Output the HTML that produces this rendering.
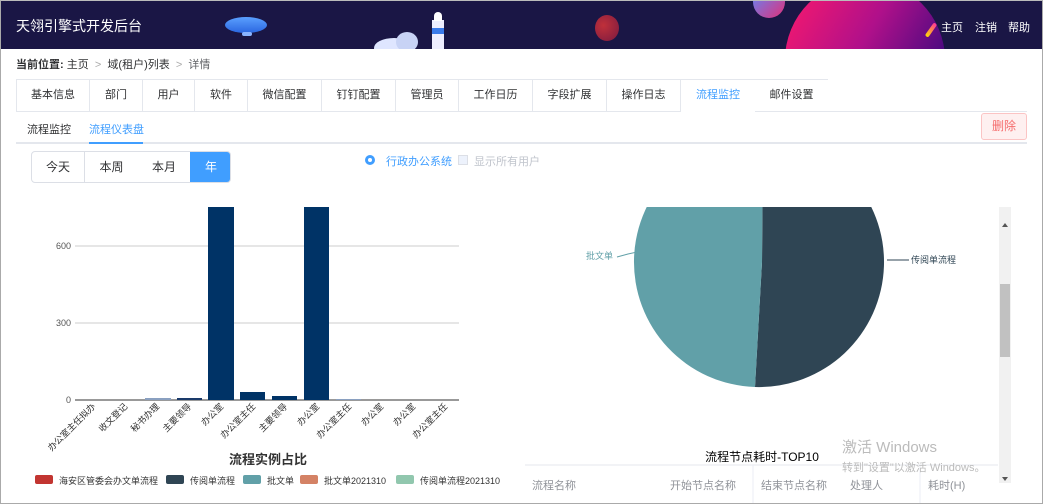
<!DOCTYPE html>
<html><head><meta charset="utf-8">
<style>
*{margin:0;padding:0;box-sizing:border-box}
body{width:1043px;height:504px;overflow:hidden;background:#fff;font-family:"Liberation Sans","Noto Sans CJK SC",sans-serif;position:relative;font-size:12px;color:#303133}
.frame{position:absolute;left:0;top:0;width:1043px;height:504px;border:1px solid #aaa;border-top:1px solid #bbb;pointer-events:none;z-index:10}
.hdr{position:absolute;left:0;top:0;width:1043px;height:49px;background:#1a1645;overflow:hidden}
.abs{position:absolute}
.tab{position:absolute;top:79px;height:32px;line-height:32px;text-align:center;font-size:11px;color:#303133;border-right:1px solid #e4e7ed}
</style></head><body>
<div class="hdr">
  <div class="abs" style="left:16px;top:16px;color:#fff;font-size:14px">天翎引擎式开发后台</div>
  <div class="abs" style="left:225px;top:17px;width:42px;height:16px;border-radius:50%;background:linear-gradient(#5aa0ff,#2a66e0)"></div>
  <div class="abs" style="left:242px;top:32px;width:10px;height:4px;background:#8ab4ff;border-radius:2px"></div>
  <div class="abs" style="left:374px;top:38px;width:40px;height:20px;border-radius:50%;background:#dfe6ff"></div>
  <div class="abs" style="left:396px;top:32px;width:22px;height:20px;border-radius:50%;background:#c8d3f5"></div>
  <div class="abs" style="left:432px;top:20px;width:12px;height:30px;background:#eef"></div>
  <div class="abs" style="left:432px;top:28px;width:12px;height:6px;background:#3b7bea"></div>
  <div class="abs" style="left:434px;top:12px;width:8px;height:9px;background:#fff;border-radius:4px 4px 0 0"></div>
  <div class="abs" style="left:595px;top:15px;width:24px;height:26px;border-radius:50%;background:radial-gradient(circle at 35% 40%,#c0303a,#7a1a40)"></div>
  <div class="abs" style="left:753px;top:-14px;width:32px;height:32px;border-radius:50%;background:linear-gradient(135deg,#5a8cff,#e0307a)"></div>
  <div class="abs" style="left:785px;top:-20px;width:160px;height:160px;border-radius:50%;background:linear-gradient(120deg,#ff1a6a,#b0108a 45%,#4a0a80 80%)"></div>
  <div class="abs" style="left:929px;top:22px;width:4px;height:16px;background:linear-gradient(#f39,#fd0);transform:rotate(35deg);border-radius:2px"></div>
  <div class="abs" style="left:941px;top:19px;color:#fff;font-size:11px">主页</div>
  <div class="abs" style="left:975px;top:19px;color:#fff;font-size:11px">注销</div>
  <div class="abs" style="left:1008px;top:19px;color:#fff;font-size:11px">帮助</div>
</div>
<div class="abs" style="left:16px;top:56px;font-size:11px;color:#303133"><b>当前位置:</b> 主页 <span style="color:#aaa">&nbsp;&gt;&nbsp;</span> 域(租户)列表 <span style="color:#aaa">&nbsp;&gt;&nbsp;</span> <span style="color:#606266">详情</span></div>
<div class="abs" style="left:16px;top:79px;width:812px;height:1px;background:#e4e7ed"></div>
<div class="abs" style="left:16px;top:79px;width:1px;height:32px;background:#e4e7ed"></div>
<div class="abs" style="left:16px;top:111px;width:665px;height:1px;background:#e4e7ed"></div>
<div class="abs" style="left:755px;top:111px;width:272px;height:1px;background:#e4e7ed"></div>
<div class="tab" style="left:17px;width:73px">基本信息</div>
<div class="tab" style="left:90px;width:53px">部门</div>
<div class="tab" style="left:143px;width:52px">用户</div>
<div class="tab" style="left:195px;width:53px">软件</div>
<div class="tab" style="left:248px;width:74px">微信配置</div>
<div class="tab" style="left:322px;width:74px">钉钉配置</div>
<div class="tab" style="left:396px;width:63px">管理员</div>
<div class="tab" style="left:459px;width:74px">工作日历</div>
<div class="tab" style="left:533px;width:74px">字段扩展</div>
<div class="tab" style="left:607px;width:74px">操作日志</div>
<div class="tab" style="left:681px;width:74px;color:#409eff;border-right:none">流程监控</div>
<div class="tab" style="left:755px;width:73px;border-right:none">邮件设置</div>
<div class="abs" style="left:27px;top:121px;font-size:11px;color:#303133">流程监控</div>
<div class="abs" style="left:89px;top:121px;font-size:11px;color:#409eff">流程仪表盘</div>
<div class="abs" style="left:16px;top:142px;width:1011px;height:2px;background:#e4e7ed"></div>
<div class="abs" style="left:89px;top:142px;width:54px;height:2px;background:#409eff"></div>
<div class="abs" style="left:981px;top:113px;width:46px;height:27px;background:#fef0f0;border:1px solid #fbc4c4;border-radius:3px;color:#f56c6c;text-align:center;line-height:25px;font-size:12px">删除</div>
<div class="abs" style="left:31px;top:151px;width:200px;height:32px;border:1px solid #dcdfe6;border-radius:4px;overflow:hidden;font-size:12px">
  <div class="abs" style="left:0;top:0;width:53px;height:30px;line-height:30px;text-align:center;border-right:1px solid #dcdfe6">今天</div>
  <div class="abs" style="left:53px;top:0;width:53px;height:30px;line-height:30px;text-align:center">本周</div>
  <div class="abs" style="left:106px;top:0;width:52px;height:30px;line-height:30px;text-align:center">本月</div>
  <div class="abs" style="left:158px;top:-1px;width:42px;height:32px;line-height:32px;text-align:center;background:#409eff;color:#fff">年</div>
</div>
<div class="abs" style="left:365px;top:155px;width:10px;height:10px;border-radius:50%;background:#409eff"></div>
<div class="abs" style="left:368px;top:158px;width:4px;height:4px;border-radius:50%;background:#fff"></div>
<div class="abs" style="left:386px;top:153px;color:#409eff;font-size:11px">行政办公系统</div>
<div class="abs" style="left:458px;top:155px;width:10px;height:10px;border:1px solid #dcdfe6;background:#edf2fc"></div>
<div class="abs" style="left:474px;top:153px;color:#c0c4cc;font-size:11px">显示所有用户</div>

<svg class="abs" style="left:0;top:200px" width="520" height="304">
  <g font-family="Liberation Sans,Noto Sans CJK SC,sans-serif" font-size="9" fill="#555">
  <line x1="75" y1="46" x2="459" y2="46" stroke="#ccc"/>
  <line x1="75" y1="123" x2="459" y2="123" stroke="#ccc"/>
  <line x1="75" y1="200" x2="459" y2="200" stroke="#333"/>
  <text x="71" y="49" text-anchor="end">600</text><text x="71" y="126" text-anchor="end">300</text><text x="71" y="203" text-anchor="end">0</text>
  <rect x="145" y="198" width="26" height="2" fill="#8aa0c0"/>
  <rect x="177" y="198" width="25" height="2" fill="#1a3a6a"/>
  <rect x="208" y="7" width="26" height="193" fill="#003366"/>
  <rect x="240" y="192" width="25" height="8" fill="#003366"/>
  <rect x="272" y="196" width="25" height="4" fill="#003366"/>
  <rect x="304" y="7" width="25" height="193" fill="#003366"/>
  <rect x="336" y="199" width="25" height="1" fill="#8aa0c0"/>
  <g fill="#333">
  <text transform="translate(96,207) rotate(-45)" text-anchor="end">办公室主任拟办</text>
  <text transform="translate(128,207) rotate(-45)" text-anchor="end">收文登记</text>
  <text transform="translate(160,207) rotate(-45)" text-anchor="end">秘书办理</text>
  <text transform="translate(192,207) rotate(-45)" text-anchor="end">主要领导</text>
  <text transform="translate(224,207) rotate(-45)" text-anchor="end">办公室</text>
  <text transform="translate(256,207) rotate(-45)" text-anchor="end">办公室主任</text>
  <text transform="translate(288,207) rotate(-45)" text-anchor="end">主要领导</text>
  <text transform="translate(320,207) rotate(-45)" text-anchor="end">办公室</text>
  <text transform="translate(352,207) rotate(-45)" text-anchor="end">办公室主任</text>
  <text transform="translate(384,207) rotate(-45)" text-anchor="end">办公室</text>
  <text transform="translate(416,207) rotate(-45)" text-anchor="end">办公室</text>
  <text transform="translate(448,207) rotate(-45)" text-anchor="end">办公室主任</text>
  </g>
  <text x="268" y="264" text-anchor="middle" font-size="13" font-weight="bold" fill="#333">流程实例占比</text>
  <rect x="35" y="275" width="18" height="9" rx="2" fill="#c23531"/><text x="59" y="284" fill="#333">海安区管委会办文单流程</text>
  <rect x="166" y="275" width="18" height="9" rx="2" fill="#2f4554"/><text x="190" y="284" fill="#333">传阅单流程</text>
  <rect x="243" y="275" width="18" height="9" rx="2" fill="#61a0a8"/><text x="267" y="284" fill="#333">批文单</text>
  <rect x="300" y="275" width="18" height="9" rx="2" fill="#d48265"/><text x="324" y="284" fill="#333">批文单2021310</text>
  <rect x="396" y="275" width="18" height="9" rx="2" fill="#91c7ae"/><text x="420" y="284" fill="#333">传阅单流程2021310</text>
  </g>
</svg>

<svg class="abs" style="left:520px;top:200px" width="523" height="304">
  <defs><clipPath id="c"><rect x="0" y="7" width="480" height="300"/></clipPath></defs>
  <g clip-path="url(#c)">
    <path d="M242,62 L243,-63 A125,125 0 0 1 235,187 Z" fill="#2f4554"/>
    <path d="M242,62 L235,187 A125,125 0 0 1 243,-63 Z" fill="#61a0a8"/>
  </g>
  <g font-family="Liberation Sans,Noto Sans CJK SC,sans-serif" font-size="9">
  <polyline points="97,57 108,54 117,52" fill="none" stroke="#61a0a8"/>
  <text x="66" y="59" fill="#61a0a8">批文单</text>
  <line x1="367" y1="60" x2="389" y2="60" stroke="#2f4554"/>
  <text x="391" y="63" fill="#2f4554">传阅单流程</text>
  <text x="242" y="261" text-anchor="middle" font-size="12" fill="#000">流程节点耗时-TOP10</text>
  <line x1="5" y1="265" x2="478" y2="265" stroke="#e4e7ed"/>
  <line x1="233" y1="265" x2="233" y2="304" stroke="#ebeef5"/>
  <line x1="400" y1="265" x2="400" y2="304" stroke="#ebeef5"/>
  <g fill="#909399" font-size="11"><text x="12" y="289">流程名称</text><text x="150" y="289">开始节点名称</text><text x="241" y="289">结束节点名称</text><text x="330" y="289">处理人</text><text x="408" y="289">耗时(H)</text></g>
  <text x="322" y="252" font-size="15" fill="#bbb">激活 Windows</text>
  <text x="322" y="271" font-size="11" fill="#bbb">转到"设置"以激活 Windows。</text>
  </g>
  <rect x="479" y="7" width="12" height="276" fill="#f1f1f1"/>
  <rect x="480" y="84" width="10" height="73" fill="#c1c1c1"/>
  <path d="M482,27 L485,23 L488,27Z" fill="#555"/>
  <path d="M482,277 L485,281 L488,277Z" fill="#555"/>
</svg>
<div class="frame"></div>
</body></html>
